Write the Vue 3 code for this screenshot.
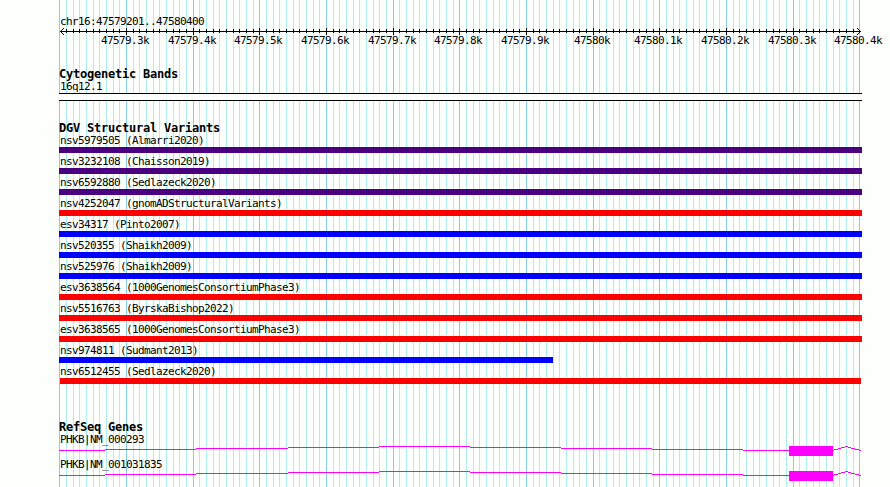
<template>
  <div class="browser">
    <svg class="grid" width="890" height="487" shape-rendering="crispEdges">
      <rect
        v-for="line in gridLines"
        :key="line.x"
        :class="line.major ? 'grid-major' : 'grid-minor'"
        :x="line.x"
        y="0"
        width="1"
        height="487"
      />
    </svg>

    <main class="tracks">
      <!-- Ruler -->
      <section class="ruler">
        <div class="label">chr16:47579201..47580400</div>
        <svg class="axis" width="831" height="40" shape-rendering="crispEdges">
          <rect x="1" y="3" width="801" height="1" />
          <path d="M2 2h1v1h-1zM3 1h1v1h-1zM4 0h1v1h-1zM2 4h1v1h-1zM3 5h1v1h-1zM4 6h1v1h-1z" />
          <path d="M800 2h1v1h-1zM799 1h1v1h-1zM798 0h1v1h-1zM800 4h1v1h-1zM799 5h1v1h-1zM798 6h1v1h-1z" />
          <rect
            v-for="line in ticks"
            :key="line.x"
            :x="line.x - 59"
            :y="line.major ? 0 : 1"
            width="1"
            :height="line.major ? 7 : 4"
          />
          <text
            v-for="tick in tickLabels"
            :key="tick.text"
            :x="tick.x"
            y="16"
          >{{ tick.text }}</text>
        </svg>
      </section>

      <!-- Cytogenetic bands -->
      <section class="track">
        <h2>Cytogenetic Bands</h2>
        <div class="label">16q12.1</div>
        <div class="band"></div>
      </section>

      <!-- Structural variants -->
      <section class="track">
        <h2>DGV Structural Variants</h2>
        <div v-for="v in variants" :key="v.id" class="variant">
          <div class="label">{{ v.id }} ({{ v.study }})</div>
          <div
            class="bar"
            :class="v.type"
            :style="{ marginLeft: `${v.start || 0}px`, width: `${v.width || 803}px` }"
          ></div>
        </div>
      </section>

      <!-- Genes -->
      <section class="track genes">
        <h2>RefSeq Genes</h2>
        <div v-for="gene in genes" :key="gene" class="gene">
          <div class="label">{{ gene }}</div>
          <svg class="transcript" width="803" height="10" shape-rendering="crispEdges">
            <rect
              v-for="seg in introns"
              :key="seg[0]"
              :x="seg[0] - 59"
              :y="seg[2]"
              :width="seg[1] - seg[0]"
              height="1"
            />
            <rect x="730" y="0" width="44" height="10" />
          </svg>
        </div>
      </section>
    </main>
  </div>
</template>

<script setup>
// one grid line every 10bp, a major one every 100bp
const gridLines = Array.from({ length: 121 }, (_, i) => ({
  x: Math.floor(59.67 + (i * 20) / 3),
  major: i % 10 === 0
}))

const ticks = gridLines.slice(1, -1)

const tickLabels = gridLines
  .filter((line, i) => line.major && i > 0)
  .map((line, i) => {
    const pos = 475793 + i
    const text = pos % 10 === 0 ? `${pos / 10}k` : `${(pos / 10).toFixed(1)}k`
    return { text, x: line.x - 60 - text.length * 3 }
  })

const variants = [
  { id: 'nsv5979505', study: 'Almarri2020', type: 'complex' },
  { id: 'nsv3232108', study: 'Chaisson2019', type: 'complex' },
  { id: 'nsv6592880', study: 'Sedlazeck2020', type: 'complex' },
  { id: 'nsv4252047', study: 'gnomADStructuralVariants', type: 'loss' },
  { id: 'esv34317', study: 'Pinto2007', type: 'gain' },
  { id: 'nsv520355', study: 'Shaikh2009', type: 'gain' },
  { id: 'nsv525976', study: 'Shaikh2009', type: 'gain' },
  { id: 'esv3638564', study: '1000GenomesConsortiumPhase3', type: 'loss' },
  { id: 'nsv5516763', study: 'ByrskaBishop2022', type: 'loss' },
  { id: 'esv3638565', study: '1000GenomesConsortiumPhase3', type: 'loss' },
  { id: 'nsv974811', study: 'Sudmant2013', type: 'gain', width: 494 },
  { id: 'nsv6512455', study: 'Sedlazeck2020', type: 'loss', start: 1, width: 801 }
]

const genes = ['PHKB|NM_000293', 'PHKB|NM_001031835']

// [from, to, y]
const introns = [
  [59, 105, 4],
  [105, 196, 3],
  [196, 288, 2],
  [288, 379, 1],
  [379, 470, 0],
  [470, 561, 1],
  [561, 652, 2],
  [652, 743, 3],
  [743, 789, 4],
  [833, 834, 4],
  [834, 838, 3],
  [838, 841, 2],
  [841, 845, 1],
  [845, 848, 0],
  [848, 851, 1],
  [851, 855, 2],
  [855, 859, 3],
  [859, 861, 4]
]
</script>

<style scoped>
.browser {
  display: grid;
  width: 890px;
  height: 487px;
  overflow: hidden;
  background: #fdfffc;
  color: #000;
  font-family: "DejaVu Sans Mono", "Liberation Mono", monospace;
  font-size: 11px;
  line-height: 13px;
  letter-spacing: -0.62px;
}

.grid,
.tracks {
  grid-area: 1 / 1;
}

.grid-minor {
  fill: #afeeee;
}

.grid-major {
  fill: #87ceeb;
}

.tracks {
  padding: 15px 0 0 59px;
}

.label {
  height: 13px;
  padding-left: 1px;
  white-space: pre;
}

.axis {
  display: block;
}

.axis text {
  font-size: 11px;
}

h2 {
  margin: 0;
  height: 12px;
  font-size: 12px;
  font-weight: bold;
  line-height: 13px;
  letter-spacing: -0.22px;
  white-space: pre;
}

.track {
  margin-bottom: 21px;
}

.band {
  box-sizing: border-box;
  width: 803px;
  height: 8px;
  background: #fdfffc;
  border-top: 1px solid #000;
  border-bottom: 1px solid #000;
}

.variant {
  height: 21px;
}

.bar {
  height: 6px;
}

.complex {
  background: #4b0082;
}

.loss {
  background: #f00;
}

.gain {
  background: #00f;
}

.genes {
  margin: 35px 0 0;
}

.gene {
  height: 25px;
}

.transcript {
  display: block;
  fill: #f0f;
}
</style>
